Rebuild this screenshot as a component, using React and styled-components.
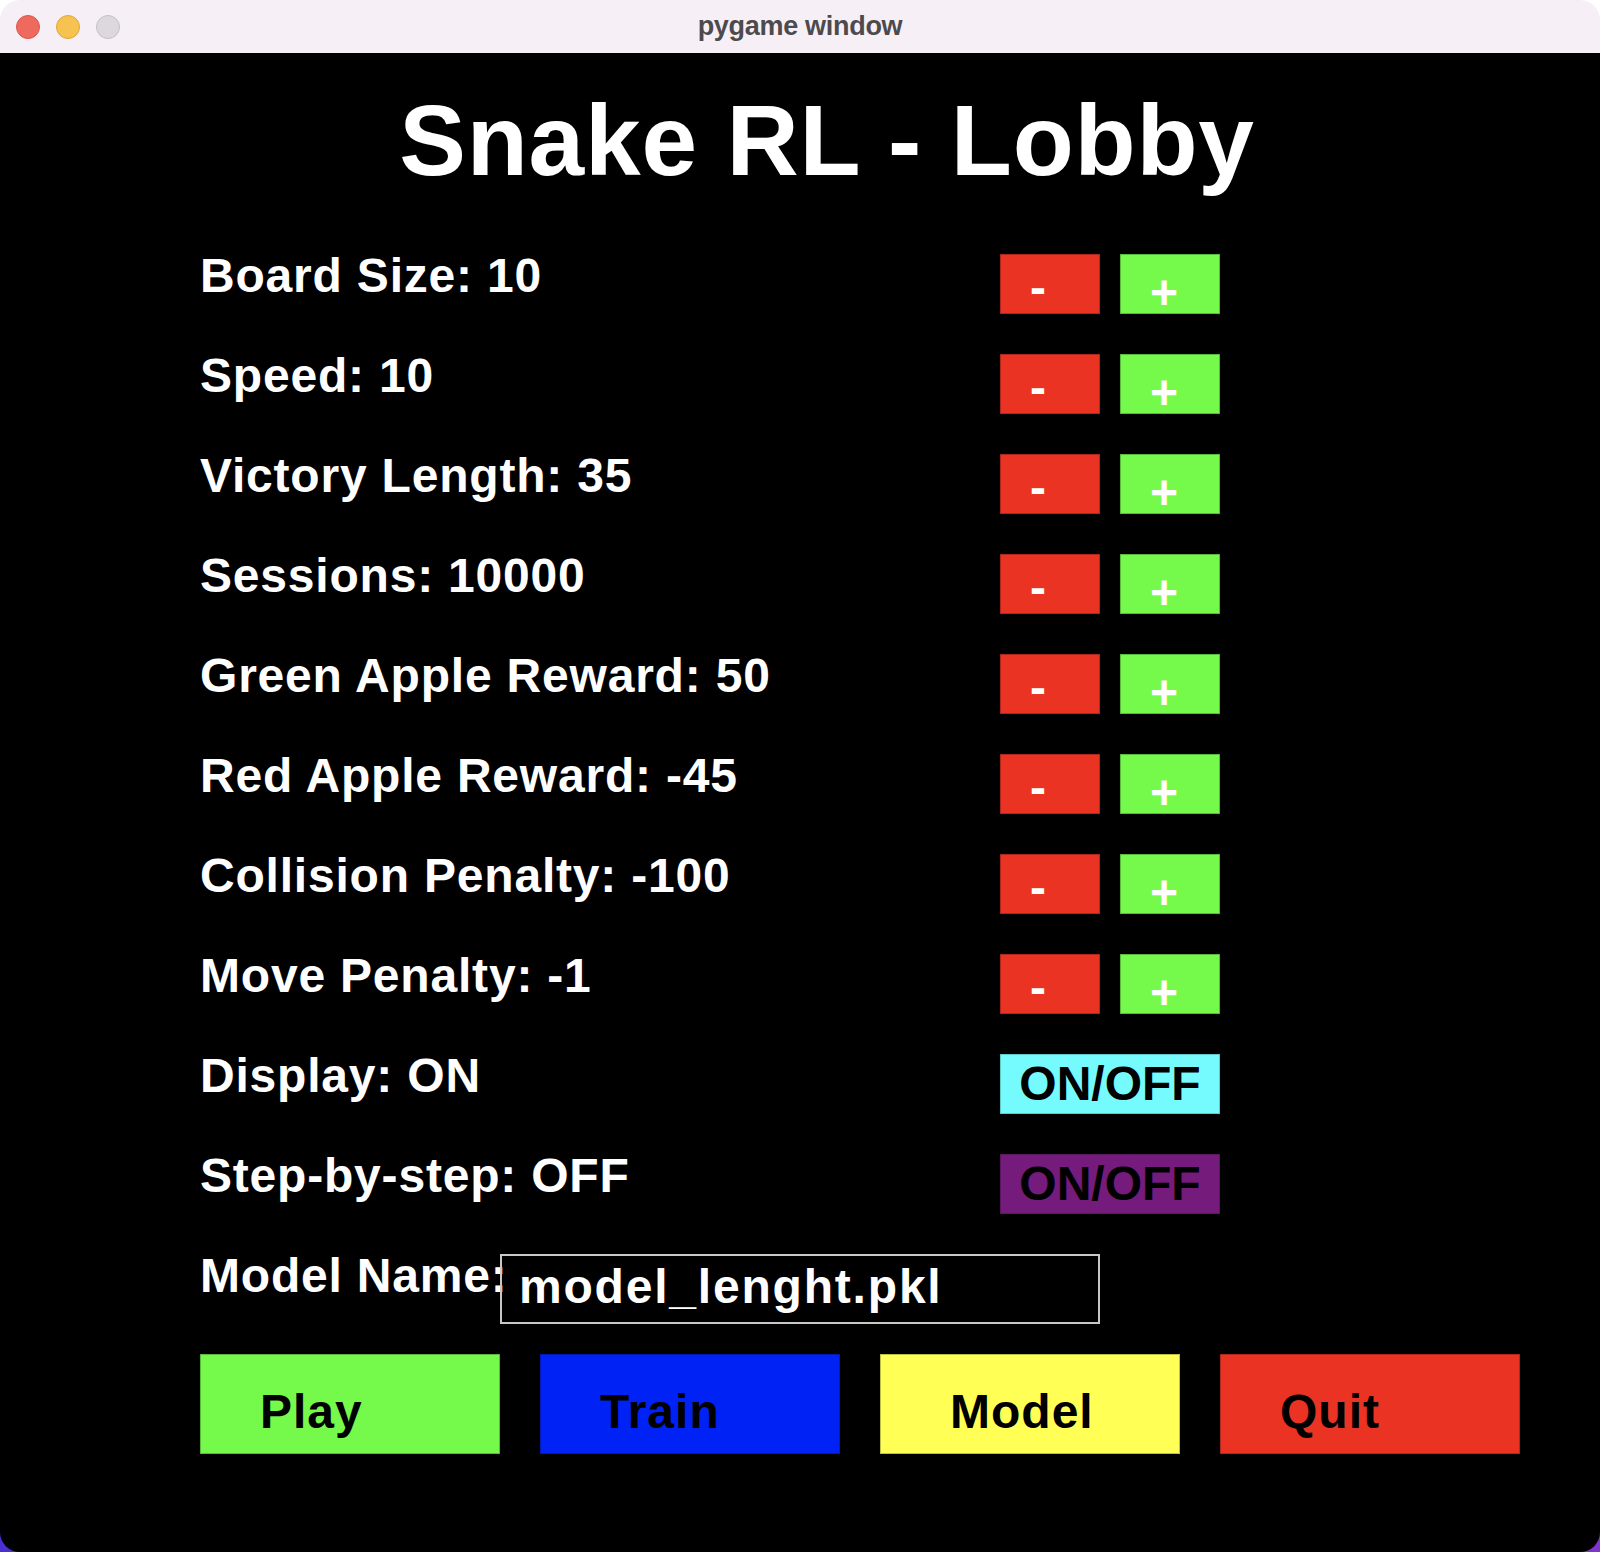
import React from 'react';
import styled, { createGlobalStyle } from 'styled-components';

const colors = {
  red: '#ea3323',
  green: '#75fa4c',
  blue: '#0022f5',
  yellow: '#ffff55',
  cyan: '#75fbfd',
  purple: '#741b7c',
};

const GlobalStyle = createGlobalStyle`
  html, body {
    margin: 0;
    padding: 0;
  }
  body {
    width: 1600px;
    height: 1552px;
    overflow: hidden;
    background:
      linear-gradient(to bottom, #ffffff 50%, transparent 50%),
      linear-gradient(to right, #4a2fd2, #7e35c9);
    font-family: 'Liberation Sans', Arial, sans-serif;
  }
`;

const Window = styled.div`
  width: 1600px;
  height: 1552px;
  display: flex;
  flex-direction: column;
  border-radius: 20px;
  overflow: hidden;
`;

const TitleBar = styled.div`
  height: 53px;
  flex-shrink: 0;
  display: grid;
  grid-template-columns: 1fr auto 1fr;
  align-items: center;
  background: #f6f0f6;
`;

const Lights = styled.div`
  display: flex;
  gap: 16px;
  padding-left: 16px;
`;

const Light = styled.span`
  width: 24px;
  height: 24px;
  border-radius: 50%;
  box-sizing: border-box;
  background: ${(p) => p.$color};
  border: 1px solid ${(p) => p.$edge};
`;

const WindowTitle = styled.div`
  font-size: 27px;
  font-weight: 700;
  color: #4d4a4d;
  letter-spacing: -0.3px;
`;

const Screen = styled.div`
  flex: 1;
  background: #000;
  display: flex;
  flex-direction: column;
  padding-left: 200px;
`;

const Heading = styled.h1`
  margin: 37px 0 64px -200px;
  padding-left: 54px;
  text-align: center;
  font-size: 100px;
  line-height: 100px;
  font-weight: 700;
  letter-spacing: 0.8px;
  color: #fff;
`;

const Rows = styled.div`
  display: flex;
  flex-direction: column;
  gap: 40px;
`;

const Row = styled.div`
  display: flex;
  height: ${(p) => p.$height || 60}px;
`;

const Label = styled.div`
  width: ${(p) => p.$width || 800}px;
  flex-shrink: 0;
  margin-top: -2px;
  font-size: 48px;
  line-height: 48px;
  font-weight: 700;
  letter-spacing: 0.8px;
  color: #fff;
  white-space: nowrap;
`;

const Stepper = styled.div`
  display: flex;
  gap: 20px;
`;

const StepButton = styled.button`
  width: 100px;
  height: 60px;
  margin: 0;
  border: none;
  box-sizing: border-box;
  padding: ${(p) => p.$drop}px 0 0 30px;
  text-align: left;
  align-self: flex-start;
  background: ${(p) => p.$color};
  box-shadow: inset 0 0 0 1px rgba(0, 0, 0, 0.25);
  font-family: inherit;
  font-size: 48px;
  line-height: 48px;
  font-weight: 700;
  color: #fff;
  cursor: pointer;
`;

const ToggleButton = styled.button`
  width: 220px;
  height: 60px;
  margin: 0;
  padding: 0;
  border: none;
  background: ${(p) => p.$color};
  box-shadow: inset 0 0 0 1px rgba(0, 0, 0, 0.2);
  font-family: inherit;
  font-size: 48px;
  line-height: 60px;
  font-weight: 700;
  color: #000;
  cursor: pointer;
`;

const NameBox = styled.div`
  position: relative;
  width: 600px;
  height: 70px;
  box-sizing: border-box;
  border: 2px solid #c8c8c8;
  padding: 7px 0 0 17px;
  font-size: 48px;
  line-height: 48px;
  font-weight: 700;
  letter-spacing: 1.8px;
  color: #fff;
`;

const ActionBar = styled.div`
  display: flex;
  gap: 40px;
  margin-top: 30px;
`;

const ActionButton = styled.button`
  width: 300px;
  height: 100px;
  margin: 0;
  border: none;
  box-sizing: border-box;
  padding: 15px 0 0 ${(p) => p.$indent || 60}px;
  text-align: left;
  vertical-align: top;
  background: ${(p) => p.$color};
  box-shadow: inset 0 0 0 1px rgba(0, 0, 0, 0.25);
  font-family: inherit;
  font-size: 48px;
  line-height: 48px;
  font-weight: 700;
  letter-spacing: 1px;
  color: #000;
  cursor: pointer;
`;

const settings = [
  { label: 'Board Size', value: 10 },
  { label: 'Speed', value: 10 },
  { label: 'Victory Length', value: 35 },
  { label: 'Sessions', value: 10000 },
  { label: 'Green Apple Reward', value: 50 },
  { label: 'Red Apple Reward', value: -45 },
  { label: 'Collision Penalty', value: -100 },
  { label: 'Move Penalty', value: -1 },
];

const toggles = [
  { label: 'Display', on: true, color: colors.cyan },
  { label: 'Step-by-step', on: false, color: colors.purple },
];

const actions = [
  { label: 'Play', color: colors.green },
  { label: 'Train', color: colors.blue },
  { label: 'Model', color: colors.yellow, indent: 70 },
  { label: 'Quit', color: colors.red },
];

const App = () => {
  return (
    <>
      <GlobalStyle />
      <Window>
        <TitleBar>
          <Lights>
            <Light $color='#ee6a5f' $edge='#d8574c' />
            <Light $color='#f6c350' $edge='#dca73c' />
            <Light $color='#dcd8dc' $edge='#c4bfc4' />
          </Lights>
          <WindowTitle>pygame window</WindowTitle>
          <div />
        </TitleBar>
        <Screen>
          <Heading>Snake RL - Lobby</Heading>
          <Rows>
            {settings.map((s) => (
              <Row key={s.label}>
                <Label>
                  {s.label}: {s.value}
                </Label>
                <Stepper>
                  <StepButton $color={colors.red} $drop={7}>
                    -
                  </StepButton>
                  <StepButton $color={colors.green} $drop={15}>
                    +
                  </StepButton>
                </Stepper>
              </Row>
            ))}
            {toggles.map((t) => (
              <Row key={t.label}>
                <Label>
                  {t.label}: {t.on ? 'ON' : 'OFF'}
                </Label>
                <ToggleButton $color={t.color}>ON/OFF</ToggleButton>
              </Row>
            ))}
            <Row $height={70}>
              <Label $width={300}>Model Name:</Label>
              <NameBox>model_lenght.pkl</NameBox>
            </Row>
          </Rows>
          <ActionBar>
            {actions.map((a) => (
              <ActionButton key={a.label} $color={a.color} $indent={a.indent}>
                {a.label}
              </ActionButton>
            ))}
          </ActionBar>
        </Screen>
      </Window>
    </>
  );
};

export default App;
